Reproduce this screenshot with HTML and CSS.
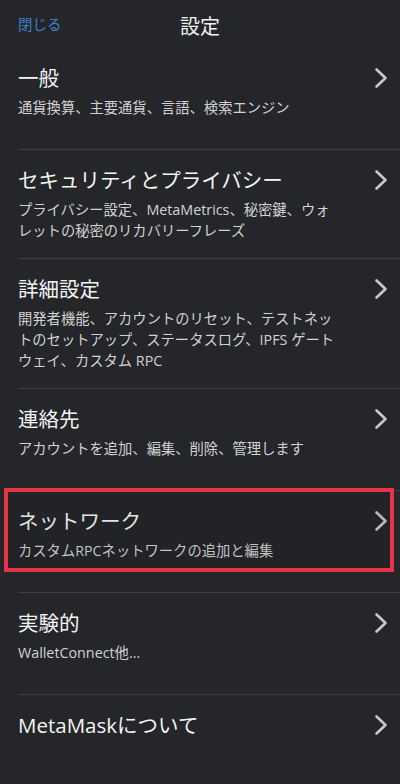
FILE: index.html
```html
<!DOCTYPE html>
<html lang="ja">
<head>
<meta charset="utf-8">
<link rel="stylesheet" href="styles.css">
</head>
<body>
<div class="screen">
  <header class="header">
    <span class="close">閉じる</span>
    <span class="heading">設定</span>
    <span></span>
  </header>
  <div class="list">
    <div class="row">
      <div class="title"><span>一般</span><svg class="chev" viewBox="0 0 14 22"><polyline points="2.5,2.5 11.5,11 2.5,19.5"/></svg></div>
      <div class="sub">通貨換算、主要通貨、言語、検索エンジン</div>
    </div>
    <div class="row">
      <div class="title"><span>セキュリティとプライバシー</span><svg class="chev" viewBox="0 0 14 22"><polyline points="2.5,2.5 11.5,11 2.5,19.5"/></svg></div>
      <div class="sub">プライバシー設定、MetaMetrics、秘密鍵、ウォ<br>レットの秘密のリカバリーフレーズ</div>
    </div>
    <div class="row">
      <div class="title"><span>詳細設定</span><svg class="chev" viewBox="0 0 14 22"><polyline points="2.5,2.5 11.5,11 2.5,19.5"/></svg></div>
      <div class="sub">開発者機能、アカウントのリセット、テストネッ<br>トのセットアップ、ステータスログ、IPFS ゲート<br>ウェイ、カスタム RPC</div>
    </div>
    <div class="row">
      <div class="title"><span>連絡先</span><svg class="chev" viewBox="0 0 14 22"><polyline points="2.5,2.5 11.5,11 2.5,19.5"/></svg></div>
      <div class="sub">アカウントを追加、編集、削除、管理します</div>
    </div>
    <div class="row highlighted">
      <div class="title"><span>ネットワーク</span><svg class="chev" viewBox="0 0 14 22"><polyline points="2.5,2.5 11.5,11 2.5,19.5"/></svg></div>
      <div class="sub">カスタムRPCネットワークの追加と編集</div>
      <div class="highlight-box"></div>
    </div>
    <div class="row">
      <div class="title"><span>実験的</span><svg class="chev" viewBox="0 0 14 22"><polyline points="2.5,2.5 11.5,11 2.5,19.5"/></svg></div>
      <div class="sub">WalletConnect他...</div>
    </div>
    <div class="row last">
      <div class="title"><span>MetaMaskについて</span><svg class="chev" viewBox="0 0 14 22"><polyline points="2.5,2.5 11.5,11 2.5,19.5"/></svg></div>
    </div>
  </div>
</div>
</body>
</html>
```
FILE: styles.css
```css
* { box-sizing: border-box; }
html, body { margin: 0; padding: 0; }
body {
  background: #242629;
  font-family: "Open Sans", "Noto Sans CJK JP", sans-serif;
  color: #f2f2f2;
  width: 400px;
  height: 784px;
  overflow: hidden;
}
.screen { width: 400px; }
.header {
  height: 48px;
  display: grid;
  grid-template-columns: 1fr auto 1fr;
  align-items: center;
  padding: 0 18px 0 18px;
}
.close {
  color: #3f7fc2;
  font-size: 14.5px;
  margin-top: -2px;
}
.heading {
  font-size: 20px;
  color: #f0f0f0;
  margin-top: 3px;
}
.row {
  position: relative;
  margin-left: 18px;
  padding: 17px 13px 17px 0;
  min-height: 102px;
  border-bottom: 1px solid #3b3e43;
}
.row.last { border-bottom: none; }
.title {
  display: flex;
  justify-content: space-between;
  align-items: center;
  font-size: 20.5px;
  line-height: 26px;
  color: #f4f4f4;
}
.chev {
  width: 14px;
  height: 22px;
  fill: none;
  stroke: #c9c9c9;
  stroke-width: 2.6;
  stroke-linecap: round;
  stroke-linejoin: round;
  margin-right: -1px;
}
.sub {
  margin-top: 6px;
  font-size: 14.3px;
  line-height: 21px;
  color: #d2d2d2;
}
.highlight-box {
  position: absolute;
  top: -3px;
  left: -14px;
  width: 390px;
  height: 84px;
  border: 4px solid #e8334a;
  background: rgba(0, 0, 0, 0.07);
  pointer-events: none;
}
```
